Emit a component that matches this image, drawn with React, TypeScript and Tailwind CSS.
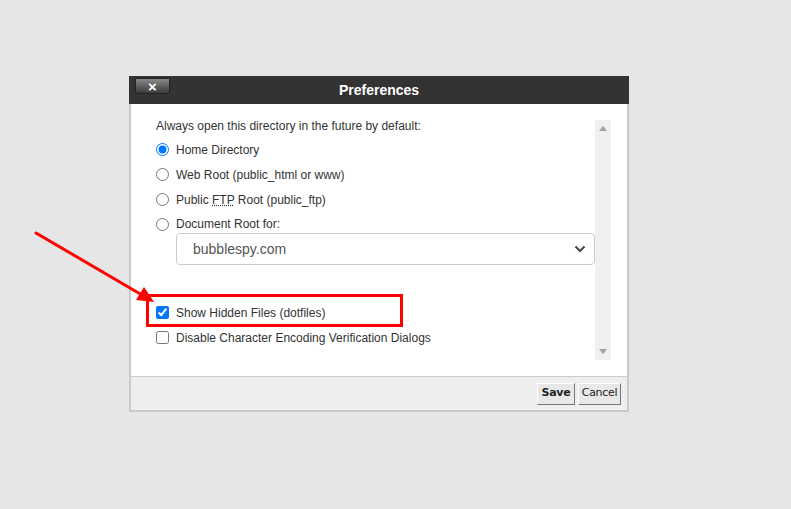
import React from 'react'

const Radio: React.FC<{ label: React.ReactNode; checked?: boolean; className?: string }> = ({ label, checked, className }) => (
    <label className={`flex items-center h-[25px] ${className ?? ''}`}>
        <input type="radio" name="dir" defaultChecked={checked} className="w-[13px] h-[13px] m-0" />
        <span className="ml-[7px]">{label}</span>
    </label>
)

const Check: React.FC<{ label: string; checked?: boolean }> = ({ label, checked }) => (
    <label className="flex items-center h-[25px]">
        <input type="checkbox" defaultChecked={checked} className="w-[13px] h-[13px] m-0" />
        <span className="ml-[7px]">{label}</span>
    </label>
)

const App: React.FC = () => {
    return (
        <div className="relative w-[791px] h-[509px] bg-[#e6e6e6] overflow-hidden" style={{ fontFamily: '"Liberation Sans", Arial, sans-serif' }}>
            <div className="pt-[76px] pl-[129px]">
                <div className="w-[500px]">
                    {/* Header */}
                    <div className="relative h-[28px] bg-[#333333] flex items-center justify-center">
                        <button className="absolute left-[6px] top-[2px] w-[35px] h-[16px] rounded-b-[3px] border border-[#222] bg-gradient-to-b from-[#8a8a8a] to-[#3c3c3c] flex items-center justify-center text-white font-bold text-[15px] leading-none">
                            ×
                        </button>
                        <h1 className="text-white font-bold text-[14px]">Preferences</h1>
                    </div>

                    {/* Body */}
                    <div className="border-x-2 border-b-2 border-[#cacaca]">
                        <div className="bg-white h-[272px] flex">
                            <div className="flex-1 pl-[25px] pt-[14px] text-[12px] text-[#333]">
                                <p className="leading-[16px] h-[19px]">Always open this directory in the future by default:</p>
                                <Radio label="Home Directory" checked />
                                <Radio label="Web Root (public_html or www)" />
                                <Radio
                                    label={
                                        <>
                                            Public <abbr className="underline decoration-dotted" title="File Transfer Protocol">FTP</abbr> Root (public_ftp)
                                        </>
                                    }
                                />
                                <Radio label="Document Root for:" className="!h-[18px] mt-[3px]" />
                                <div className="ml-[20px] w-[419px] h-[32px] border border-[#ccc] rounded-[4px] flex items-center justify-between pl-[16px] pr-[8px] text-[14px] text-[#555]">
                                    <span>bubblespy.com</span>
                                    <svg width="12" height="8" viewBox="0 0 12 8" fill="none" stroke="#444" strokeWidth="2">
                                        <path d="M1.5 1.5 L6 6 L10.5 1.5" />
                                    </svg>
                                </div>
                                <div className="mt-[35px]">
                                    <Check label="Show Hidden Files (dotfiles)" checked />
                                    <Check label="Disable Character Encoding Verification Dialogs" />
                                </div>
                            </div>
                            {/* Scrollbar */}
                            <div className="w-[16px] mt-[16px] mb-[16px] mr-[16px] bg-[#f0f0f0] flex flex-col items-center justify-between py-[6px]">
                                <svg width="8" height="5" viewBox="0 0 8 5"><path d="M0 5 L4 0 L8 5 Z" fill="#a3a3a3" /></svg>
                                <svg width="8" height="5" viewBox="0 0 8 5"><path d="M0 0 L4 5 L8 0 Z" fill="#a3a3a3" /></svg>
                            </div>
                        </div>
                        {/* Footer */}
                        <div className="border-t border-[#cccccc] bg-[#eeeeee] h-[34px] flex items-center justify-end gap-[3px] pr-[6px]" style={{ fontFamily: '"DejaVu Sans", Tahoma, sans-serif' }}>
                            <button className="h-[22px] w-[38px] bg-[#e8e8e8] border border-t-white border-l-white border-r-[#777] border-b-[#777] text-[11px] font-bold text-[#222] tracking-[-0.3px]">Save</button>
                            <button className="h-[22px] w-[43px] bg-[#e8e8e8] border border-t-white border-l-white border-r-[#777] border-b-[#777] text-[11px] text-[#222] tracking-[-0.3px]">Cancel</button>
                        </div>
                    </div>
                </div>
            </div>

            {/* Annotation: highlight box */}
            <div className="absolute left-[146px] top-[294px] w-[257px] h-[33px] border-[3px] border-[#ff0000] pointer-events-none" />

            {/* Annotation: arrow */}
            <svg className="absolute inset-0 pointer-events-none" width="791" height="509" viewBox="0 0 791 509">
                <line x1="36" y1="233" x2="142" y2="295" stroke="#ff0000" strokeWidth="3" strokeLinecap="round" />
                <path d="M154 302 L136 300 L144 287 Z" fill="#ff0000" />
            </svg>
        </div>
    )
}

export default App
